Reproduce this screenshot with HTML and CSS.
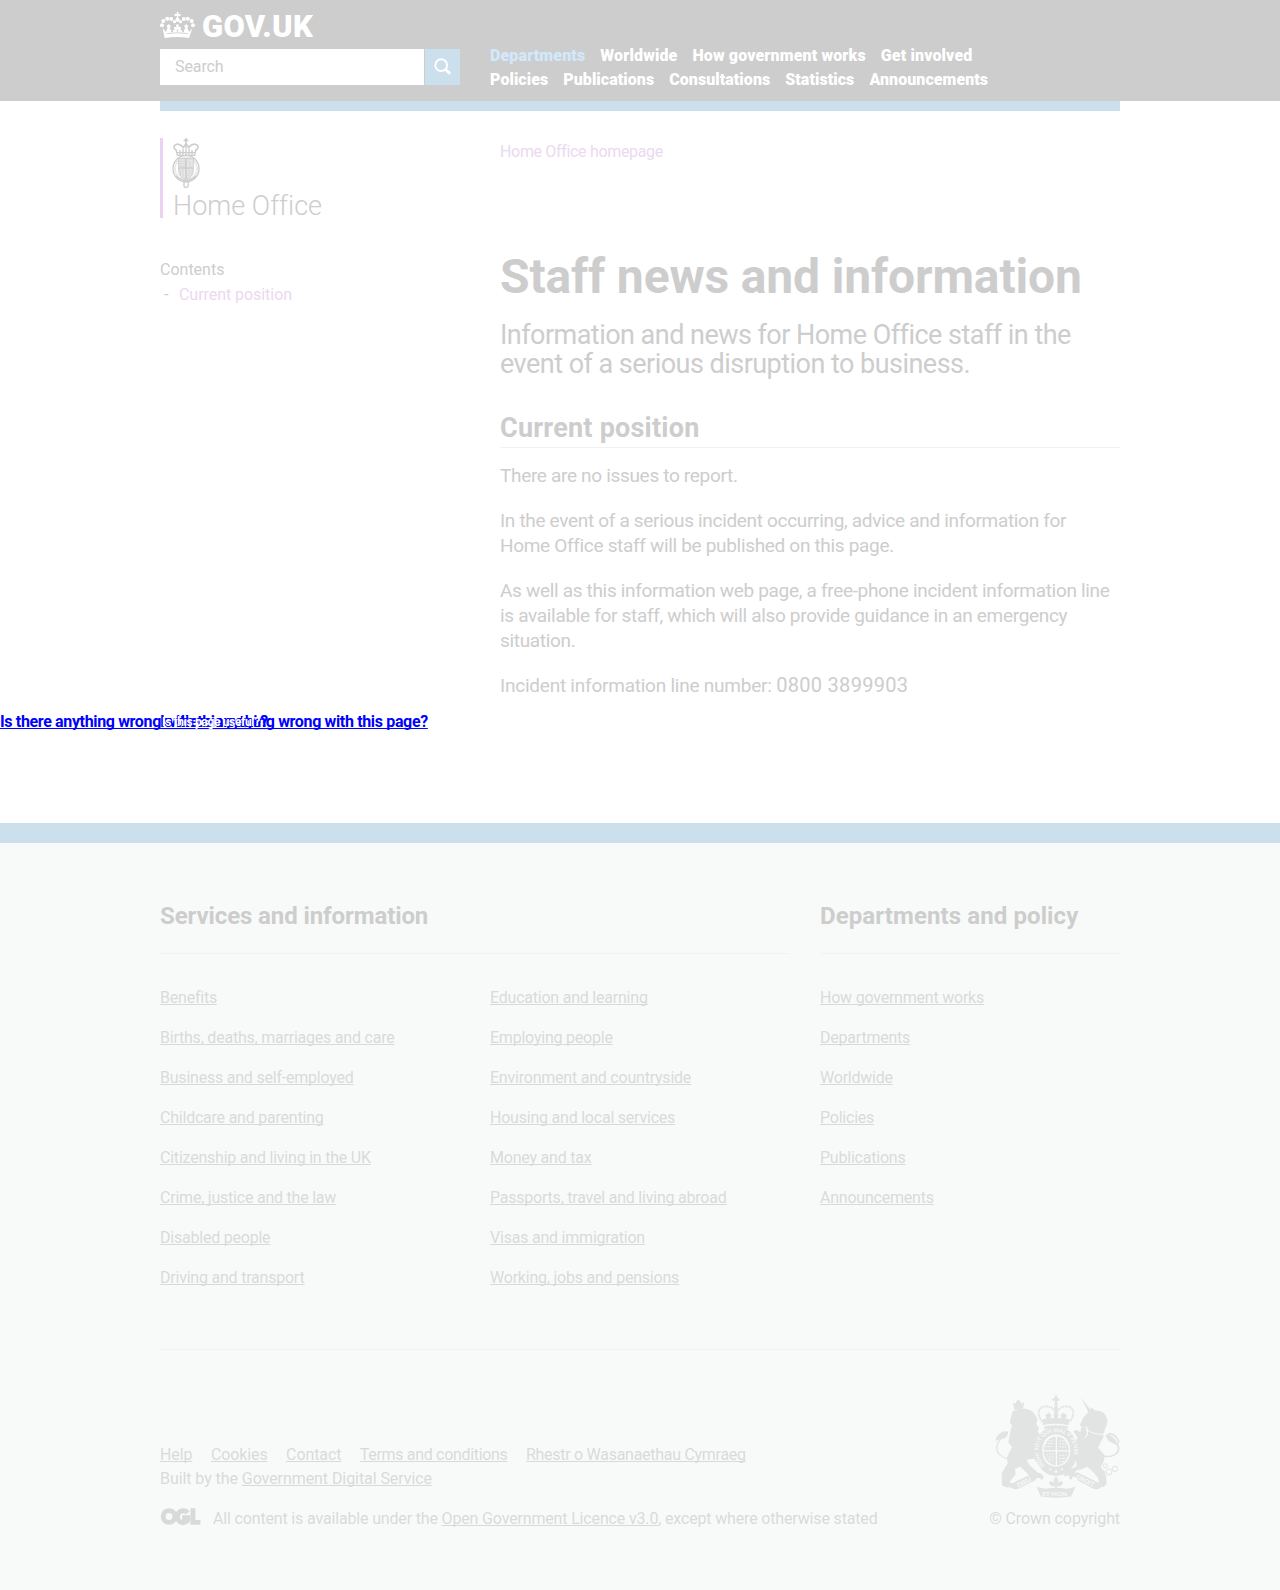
FILE: index.html
```html
<!DOCTYPE html>
<html lang="en">
<head>
<meta charset="utf-8">
<title>Staff news and information - GOV.UK</title>
<link rel="stylesheet" href="styles.css">
</head>
<body>
<header class="site-header">
  <div class="wrap header-row">
    <div class="header-left">
      <a class="logo">
        <svg class="crown" viewBox="0 0 106 78" width="35" height="26" fill="#fff">
          <path d="M50 0h6l-1 6 7-1v7l-7-1 1 7 4 5-4 6h-6l-4-6 4-5 1-7-7 1V5l7 1z"/>
          <circle cx="34" cy="21" r="6"/><circle cx="72" cy="21" r="6"/>
          <circle cx="22" cy="20" r="6"/><circle cx="84" cy="20" r="6"/>
          <circle cx="10" cy="27" r="6"/><circle cx="96" cy="27" r="6"/>
          <circle cx="6" cy="40" r="6"/><circle cx="100" cy="40" r="6"/>
          <circle cx="44" cy="29" r="5"/><circle cx="62" cy="29" r="5"/>
          <path d="M8 48l10 12 5-12-3-6 7-6 6 7-4 6 8 10 7-6-2-8h8l-2-5 5-4 5 4-2 5h8l-2 8 7 6 8-10-4-6 6-7 7 6-3 6 5 12 10-12-10 30q-36-5-74 0z"/>
          <path d="M20 65q33-5 66 0" fill="none" stroke="#cdcdcd" stroke-width="2.5"/>
          <path d="M32 61l4-7 4 7zM50 59l3-8 3 8zM66 61l4-7 4 7z" fill="#cdcdcd"/>
        </svg>
        <span class="logo-text">GOV.UK</span>
      </a>
      <form class="search">
        <span class="search-field">Search</span>
        <span class="search-button">
          <svg viewBox="0 0 18 18" width="18" height="18" fill="none" stroke="#fff"><circle cx="7.2" cy="7.2" r="5.9" stroke-width="2"/><path d="M11.5 11.5l4.6 4.2" stroke-width="3"/></svg>
        </span>
      </form>
    </div>
    <nav class="main-nav">
      <div class="nav-row"><a class="active">Departments</a><a>Worldwide</a><a>How government works</a><a>Get involved</a></div>
      <div class="nav-row second"><a>Policies</a><a>Publications</a><a>Consultations</a><a>Statistics</a><a>Announcements</a></div>
    </nav>
  </div>
</header>
<div class="wrap header-bar"></div>

<main class="wrap page">
  <aside class="side">
    <div class="org">
      <svg class="crest" viewBox="0 0 84 150" width="28" height="50" fill="none" stroke="#cdcdcd" stroke-width="3">
        <path d="M42 0v18M35 7h14" stroke-width="5"/>
        <path d="M14 38Q2 30 8 22q12-10 26 6l8-10 8 10q14-16 26-6 6 8-6 16" stroke-width="5"/>
        <path d="M12 34l4 18h52l4-18M16 44h52M24 36v14M33 32v18M42 20v30M51 32v18M60 36v14" stroke-width="4"/>
        <ellipse cx="42" cy="92" rx="39" ry="40" stroke-width="4"/>
        <ellipse cx="42" cy="92" rx="33" ry="34" stroke-width="6" stroke-dasharray="3 2" stroke="#dcdcdc"/>
        <path d="M20 62h44v34q0 22-22 28-22-6-22-28z" fill="#e8e8e8"/>
        <path d="M42 60v64M20 90h44" stroke-width="5"/>
        <path d="M22 70h18M22 77h18M22 84h18M48 68l8 6-5 8 9 4M26 96v16M33 94v22M48 99h14M47 106h13M46 113h8" stroke-width="2"/>
        <path d="M12 114q30 28 60 0M36 128h13l-1 18-6 3-6-3z" stroke-width="4"/>
      </svg>
      <span class="org-name">Home Office</span>
    </div>
    <div class="contents">
      <h2 class="contents-title">Contents</h2>
      <ol class="contents-list"><li><a>Current position</a></li></ol>
    </div>
  </aside>
  <article class="content">
    <a class="home-link">Home Office homepage</a>
    <h1>Staff news and information</h1>
    <p class="lead">Information and news for Home Office staff in the<br>event of a serious disruption to business.</p>
    <h2 class="section-title">Current position</h2>
    <div class="prose">
      <p>There are no issues to report.</p>
      <p>In the event of a serious incident occurring, advice and information for<br>Home Office staff will be published on this page.</p>
      <p>As well as this information web page, a free-phone incident information line<br>is available for staff, which will also provide guidance in an emergency<br>situation.</p>
      <p class="phone-line">Incident information line number: <span class="phone">0800 3899903</span></p>
    </div>
  </article>
</main>

<section class="feedback">
  <a class="report">Is there anything wrong with this page?</a>
  <a class="report report-inner">Is there anything wrong with this page?</a>
  <span class="useful">Is this page useful?</span>
</section>

<footer class="footer">
  <div class="wrap">
    <div class="footer-cols">
      <section>
        <h2>Services and information</h2>
        <div class="link-cols">
          <ul><li><a>Benefits</a></li><li><a>Births, deaths, marriages and care</a></li><li><a>Business and self-employed</a></li><li><a>Childcare and parenting</a></li><li><a>Citizenship and living in the UK</a></li><li><a>Crime, justice and the law</a></li><li><a>Disabled people</a></li><li><a>Driving and transport</a></li></ul>
          <ul><li><a>Education and learning</a></li><li><a>Employing people</a></li><li><a>Environment and countryside</a></li><li><a>Housing and local services</a></li><li><a>Money and tax</a></li><li><a>Passports, travel and living abroad</a></li><li><a>Visas and immigration</a></li><li><a>Working, jobs and pensions</a></li></ul>
        </div>
      </section>
      <section>
        <h2 class="policy-title">Departments and policy</h2>
        <ul><li><a>How government works</a></li><li><a>Departments</a></li><li><a>Worldwide</a></li><li><a>Policies</a></li><li><a>Publications</a></li><li><a>Announcements</a></li></ul>
      </section>
    </div>
    <div class="meta">
      <div class="meta-left">
        <div class="meta-links"><a>Help</a><a>Cookies</a><a>Contact</a><a class="terms">Terms and conditions</a><a class="welsh">Rhestr o Wasanaethau Cymraeg</a></div>
        <div class="built">Built by the <a>Government Digital Service</a></div>
        <div class="licence">
          <svg class="ogl" viewBox="0 0 122 52" width="41" height="17" fill="none" stroke="#d8dada" stroke-width="15"><circle cx="26" cy="26" r="18"/><path d="M83 15a18 18 0 1 0 0 23V30H66M99 1v43h23"/></svg>
          <span>All content is available under the <a>Open Government Licence v3.0</a>, except where otherwise stated</span>
        </div>
      </div>
      <div class="copyright">
        <svg class="arms" viewBox="42 44 378 308" width="126" height="103" fill="#e1e4e3" stroke="none">
          <!-- lion -->
          <path d="M99 65l7 5 3-8 6-4 6 4 4 8 8-5-4 18-26 5z"/>
          <path d="M97 94q14-10 32-10 20 1 31 12l12 18-3 16 8 14-4 10 12 14-6 14 4 20-8 18 12 26-8 10-17-21-22 2 8 16 28 26 9 7-3 7-24-2-14-10-23-22-16 6 2 16-18 23 12 8-3 8q-20 4-32-6l-1-34q8-18 18-30l-2-18q8-22 16-32l-12-14 6-34q2-12 6-16l-8-10 4-16z"/>
          <path d="M92 236q-28-4-38-20-10-20 6-38l14-12" stroke="#e1e4e3" stroke-width="4" fill="none"/>
          <path d="M45 182q5-18 22-28 12-4 18 0-2 14-11 20-14 0-29 8z"/>
          <!-- unicorn -->
          <path d="M303 51l31 40-8 6zM310 112l16-19 10-12 8 9q26-3 36 20 5 16-2 28l-8 22q2 14-8 24l-8 18 20 22q0 20-12 34l16 26 2 26-10 10-12-6-4-22-16-19-16-14q-16 10-32 10l-14 15-24 3 2-12 18-9 18-9-3-22-6-16 18-32 24-22q4-20-4-27l-10 3-10-6z"/>
          <path d="M279 152l12-4 10 8 2-14 14-3 4 20-8 14-16 16-2 14-10-4 2-16 6-12z"/>
          <path d="M366 226q26 6 42-6 14-14 4-28-12-10-24-12-8-12 0-20 14 0 22 12l8 14" stroke="#e1e4e3" stroke-width="5" fill="none"/>
          <path d="M376 162q20-2 36 24l6 6-10 0q-24-6-32-30z"/>
          <path d="M320 148q22 14 52 14" fill="none" stroke="#f8faf9" stroke-width="3"/>
          <g fill="none" stroke="#e1e4e3" stroke-width="3"><circle cx="352" cy="263" r="6"/><circle cx="366" cy="277" r="8"/><circle cx="387" cy="274" r="9"/><circle cx="405" cy="265" r="8"/><circle cx="376" cy="256" r="6"/></g>
          <!-- crown -->
          <path d="M224 45h8l-1 8h7v8h-7l2 13h-10l2-13h-8v-8h8z"/>
          <path d="M187 124q-14-18-10-34 7-15 25-12 14 2 20 11h12q7-9 20-11 18-3 25 12 4 16-10 34" fill="none" stroke="#e1e4e3" stroke-width="6" stroke-dasharray="5 2"/>
          <path d="M223 75h10v42h-10zM187 116l13-2-5-9 11-9 9 9-5 9 13-2-3-12h16l-3 12 13 2-5-9 9-9 11 9-5 9 13 2-4 18q-38-8-76 0zM192 138q36-7 72 0v7q-36-8-72 0z"/>
          <!-- garter and shield -->
          <path fill-rule="evenodd" d="M228 138c38 0 64 30 64 72s-26 76-64 76-62-34-62-76 24-72 62-72zm0 24c-25 0-41 20-41 48s15 48 41 48 43-20 43-48-17-48-43-48z"/>
          <ellipse cx="229" cy="211" rx="38" ry="43"/>
          <path d="M229 167v88M190 211h78" stroke="#f8faf9" stroke-width="4"/>
          <path d="M198 181h22M196 189h25M195 198h24M238 181h20M238 190h25M238 199h24M239 224h23M238 234h19M239 243h12M202 220q3 22 15 27M210 218v24M219 219v26" fill="none" stroke="#f8faf9" stroke-width="3" stroke-dasharray="5 3"/>
          <path id="garter" d="M194 255C155 208 180 155 228 155s75 55 33 109" fill="none"/>
          <text class="garter-text"><textPath href="#garter" textLength="235">HONI SOIT QUI MAL Y PENSE</textPath></text>
          <g fill="#f8faf9"><circle cx="228" cy="273" r="4"/><circle cx="211" cy="266" r="3"/><circle cx="246" cy="266" r="3"/></g>
          <!-- fleur and scrolls -->
          <path d="M228 286l8 13-3 8 11-6 5 7-8 9-10-1v11h-6v-11l-10 1-8-9 5-7 11 6-3-8z"/>
          <path d="M83 308q14 4 26-6l56-26q16-2 24 8 6 12-8 14 4-12-8-10l-8 12-48 24q-20 8-34-16zM373 308q-14 4-26-6l-54-26q-16-2-24 8-6 12 8 14-4-12 8-10l8 12 46 24q20 8 34-16zM169 318q20 8 32 6 28-4 56 0 12 2 30-6l-14 30q-45 7-90 0z"/>
          <g class="motto"><text transform="translate(115 322) rotate(-27)">DIEU</text><text x="187" y="346">ET MON</text><text transform="translate(286 293) rotate(27)">DROIT</text></g>
        </svg>
        <span>© Crown copyright</span>
      </div>
    </div>
  </div>
</footer>
</body>
</html>
```
FILE: styles.css
```css
* { box-sizing: border-box; }
body { margin: 0; background: #fff; color: #cdcdcd; font: 16px/20px Roboto, "Liberation Sans", sans-serif; letter-spacing: -.2px; }
h1, h2, p, ul, ol { margin: 0; padding: 0; }
ul, ol { list-style: none; }
.wrap { width: 960px; margin: 0 auto; }

.site-header { height: 101px; background: #cdcdcd; }
.header-row { display: flex; gap: 30px; }
.header-left { width: 300px; padding-top: 12px; }
.logo { display: flex; height: 37px; gap: 7px; color: #fff; }
.logo-text { font-size: 31px; font-weight: 900; line-height: 29px; letter-spacing: .3px; white-space: nowrap; }
.search { display: flex; gap: 1px; height: 36px; }
.search-field { width: 264px; padding: 8px 15px; background: #fff; letter-spacing: -.1px; }
.search-button { width: 35px; background: #ccdfed; padding: 9px; }
.search-button svg { display: block; }
.main-nav { padding-top: 44px; font-weight: 900; color: #fff; letter-spacing: .14px; }
.nav-row { display: flex; gap: 15px; line-height: 24px; white-space: nowrap; }
.nav-row.second { letter-spacing: .06px; }
.active { color: #d2e8fb; }
.header-bar { height: 10px; background: #ccdfed; }

.page { display: flex; height: 600px; }
.side { width: 340px; padding-top: 27px; }
.org { height: 80px; border-left: 3px solid #e9d3f1; padding-left: 9px; }
.crest { display: block; }
.org-name { display: block; padding-left: 1px; font-size: 27px; line-height: 36px; font-weight: 300; letter-spacing: .02px; font-variant-ligatures: none; }
.contents { padding-top: 42px; }
.contents-title { font-size: 16px; font-weight: 400; line-height: 20px; letter-spacing: 0; }
.contents-list li { display: flex; margin-top: 5px; }
.contents-list li::before { content: "-"; flex: none; width: 15px; padding-left: 4px; }
.contents-list a { letter-spacing: -.05px; }
.contents-list a, .home-link { color: #ead9f0; }
.content { width: 620px; padding-top: 31px; }
.home-link { display: block; letter-spacing: -.33px; }
h1 { margin-top: 90px; font-size: 48px; line-height: 50px; letter-spacing: -.15px; white-space: nowrap; }
.lead { margin-top: 19px; font-size: 27px; line-height: 29px; letter-spacing: -.53px; }
.section-title { margin-top: 34px; height: 35px; border-bottom: 1px solid #f2f2f2; font-size: 27px; line-height: 30px; letter-spacing: .22px; }
.prose { margin-top: 15px; font-size: 19px; line-height: 25px; letter-spacing: -.32px; white-space: nowrap; }
.prose p + p { margin-top: 20px; }
.prose .phone-line { letter-spacing: -.23px; }
.prose .phone { font-size: 20px; line-height: 20px; letter-spacing: .3px; }

.feedback { position: relative; height: 112px; }
.report { position: absolute; left: 0; top: 1px; color: #00f; font-weight: 700; letter-spacing: -.35px; text-decoration: underline; text-decoration-thickness: 1px; text-underline-offset: 1px; text-decoration-skip-ink: none; white-space: nowrap; }
.report-inner { left: 160px; }
.useful { position: absolute; left: 162px; top: 2px; width: 106px; height: 17px; overflow: hidden; color: #fff; border-bottom: 1px solid #e5e5e5; font-size: 12px; font-weight: 700; line-height: 18px; letter-spacing: -.35px; white-space: nowrap; }

.footer { height: 767px; border-top: 20px solid #ccdfed; background: #f8faf9; color: #d8dad9; letter-spacing: -.22px; }
.footer a { text-decoration: underline; text-decoration-thickness: 1px; text-underline-offset: 1px; text-decoration-skip-ink: none; }
.footer-cols { display: grid; grid-template-columns: 630px 300px; gap: 30px; height: 507px; padding-top: 58px; border-bottom: 1px solid #f1f3f3; }
.footer h2 { height: 53px; border-bottom: 1px solid #f1f3f3; color: #cdcdcd; font-size: 24px; line-height: 30px; letter-spacing: -.1px; }
.footer .policy-title { letter-spacing: .1px; }
.link-cols { display: grid; grid-template-columns: 1fr 300px; gap: 30px; }
.footer ul { padding-top: 34px; }
.footer li { height: 40px; white-space: nowrap; }
.meta { display: flex; justify-content: space-between; padding-top: 45px; }
.meta-left { padding-top: 48px; letter-spacing: -.1px; }
.meta-links { display: flex; gap: 18.5px; line-height: 24px; white-space: nowrap; }
.terms { letter-spacing: -.32px; }
.welsh { letter-spacing: -.28px; }
.built { line-height: 24px; letter-spacing: -.07px; }
.licence { display: flex; gap: 12px; margin-top: 18px; white-space: nowrap; letter-spacing: -.16px; }
.ogl { margin-top: -1px; }
.copyright { display: flex; flex-direction: column; align-items: flex-end; white-space: nowrap; letter-spacing: -.1px; }
.arms { display: block; margin-bottom: 11px; }
.garter-text { font: 700 16px Lato, sans-serif; fill: #f8faf9; letter-spacing: 0; }
.motto { font: 700 19px Lato, sans-serif; fill: #f8faf9; letter-spacing: 0; }
```
